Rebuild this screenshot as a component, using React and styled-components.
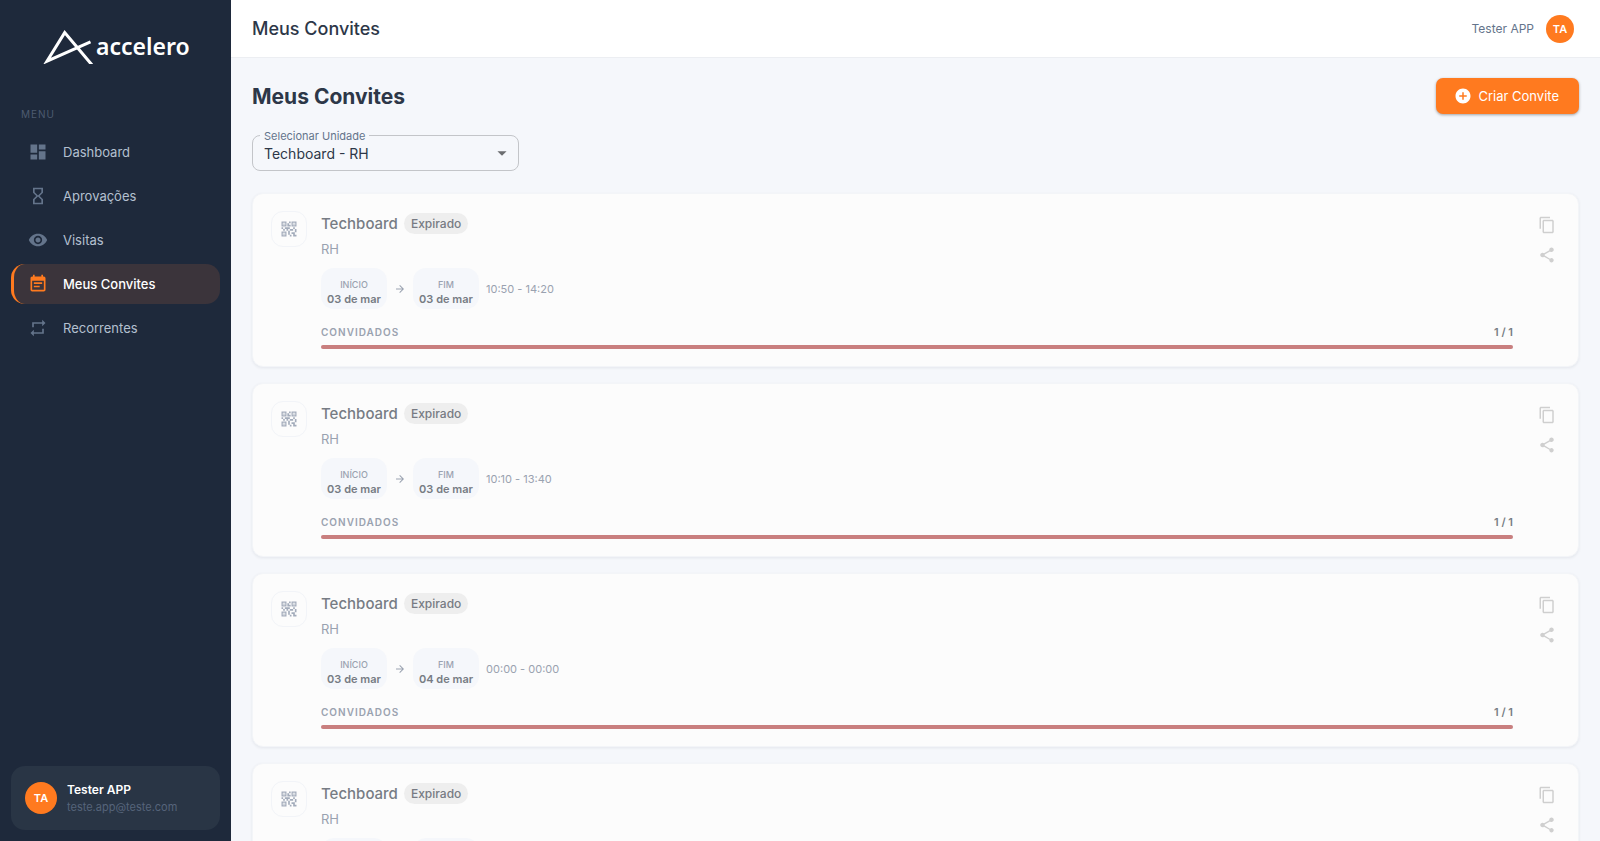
import { useState } from "react";
import styled, { createGlobalStyle } from "styled-components";
import {
  MdAddCircle,
  MdArrowDropDown,
  MdArrowForward,
  MdContentCopy,
  MdDashboard,
  MdEventNote,
  MdHourglassEmpty,
  MdQrCode2,
  MdRepeat,
  MdShare,
  MdVisibility,
} from "react-icons/md";

const menu = [
  { label: "Dashboard", icon: MdDashboard },
  { label: "Aprovações", icon: MdHourglassEmpty },
  { label: "Visitas", icon: MdVisibility },
  { label: "Meus Convites", icon: MdEventNote },
  { label: "Recorrentes", icon: MdRepeat },
];

const invites = [
  { id: 1, start: "03 de mar", end: "03 de mar", time: "10:50 - 14:20", used: 1, total: 1 },
  { id: 2, start: "03 de mar", end: "03 de mar", time: "10:10 - 13:40", used: 1, total: 1 },
  { id: 3, start: "03 de mar", end: "04 de mar", time: "00:00 - 00:00", used: 1, total: 1 },
  { id: 4, start: "03 de mar", end: "03 de mar", time: "10:00 - 12:00", used: 1, total: 1 },
];

const Logo = () => (
  <LogoRow>
    <svg width="50" height="35" viewBox="0 0 50 35" fill="none" aria-hidden="true">
      <path
        d="M47.5 12.8 L4 32.2 L21.7 3.6 L49 36"
        stroke="#fff"
        strokeWidth="3"
        strokeLinejoin="miter"
      />
    </svg>
    <LogoText>accelero</LogoText>
  </LogoRow>
);

const InviteCard = ({ invite }) => (
  <Card>
    <QrBox>
      <MdQrCode2 size={20} />
    </QrBox>

    <CardBody>
      <TitleRow>
        <CardTitle>Techboard</CardTitle>
        <Badge>Expirado</Badge>
      </TitleRow>
      <Unit>RH</Unit>

      <Dates>
        <DateChip>
          <DateLabel>INÍCIO</DateLabel>
          <DateValue>{invite.start}</DateValue>
        </DateChip>
        <MdArrowForward size={12} />
        <DateChip>
          <DateLabel>FIM</DateLabel>
          <DateValue>{invite.end}</DateValue>
        </DateChip>
        <Time>{invite.time}</Time>
      </Dates>

      <GuestsRow>
        <GuestsLabel>CONVIDADOS</GuestsLabel>
        <GuestsCount>
          {invite.used} / {invite.total}
        </GuestsCount>
      </GuestsRow>
      <Track>
        <Bar style={{ width: `${(invite.used / invite.total) * 100}%` }} />
      </Track>
    </CardBody>

    <Actions>
      <IconButton type="button" aria-label="Copiar">
        <MdContentCopy size={18} />
      </IconButton>
      <IconButton type="button" aria-label="Compartilhar">
        <MdShare size={18} />
      </IconButton>
    </Actions>
  </Card>
);

const App = () => {
  const [active, setActive] = useState("Meus Convites");
  const [unit, setUnit] = useState("rh");

  return (
    <>
      <GlobalStyle />
      <Page>
        <Sidebar>
          <Logo />
          <MenuTitle>MENU</MenuTitle>
          <Nav>
            {menu.map(({ label, icon: Icon }) => (
              <NavItem
                key={label}
                href="#"
                $active={active === label}
                onClick={() => setActive(label)}
              >
                <Icon size={20} />
                {label}
              </NavItem>
            ))}
          </Nav>

          <UserCard>
            <Avatar $size={32}>TA</Avatar>
            <div>
              <UserName>Tester APP</UserName>
              <UserEmail>teste.app@teste.com</UserEmail>
            </div>
          </UserCard>
        </Sidebar>

        <Content>
          <Header>
            <HeaderTitle>Meus Convites</HeaderTitle>
            <HeaderUser>
              Tester APP
              <Avatar $size={28}>TA</Avatar>
            </HeaderUser>
          </Header>

          <Main>
            <TopRow>
              <PageTitle>Meus Convites</PageTitle>
              <CreateButton type="button">
                <MdAddCircle size={18} />
                Criar Convite
              </CreateButton>
            </TopRow>

            <Field>
              <FieldLabel htmlFor="unit">Selecionar Unidade</FieldLabel>
              <Select id="unit" value={unit} onChange={(e) => setUnit(e.target.value)}>
                <option value="rh">Techboard - RH</option>
              </Select>
              <FieldArrow>
                <MdArrowDropDown size={22} />
              </FieldArrow>
            </Field>

            <List>
              {invites.map((invite) => (
                <InviteCard key={invite.id} invite={invite} />
              ))}
            </List>
          </Main>
        </Content>
      </Page>
    </>
  );
};

export default App;

// Styled Components
const GlobalStyle = createGlobalStyle`
  * {
    box-sizing: border-box;
  }

  body {
    margin: 0;
    font-family: Inter, "Open Sans", sans-serif;
    color: #2d3748;
    background: #f5f7fb;
  }

  button,
  select {
    font-family: inherit;
  }
`;

const Page = styled.div`
  display: flex;
  height: 100vh;
`;

const Sidebar = styled.aside`
  display: flex;
  flex-direction: column;
  flex: 0 0 231px;
  padding: 29px 11px 11px;
  background: #1e293b;
`;

const LogoRow = styled.div`
  display: flex;
  align-items: center;
  padding-left: 32px;
`;

const LogoText = styled.span`
  margin-left: 3px;
  font-family: "Noto Sans", sans-serif;
  font-size: 23px;
  font-weight: 600;
  line-height: 35px;
  color: #fff;
`;

const MenuTitle = styled.div`
  margin: 42px 0 10px;
  padding-left: 10px;
  font-size: 10px;
  line-height: 16px;
  letter-spacing: 1px;
  color: #4d5b70;
`;

const Nav = styled.nav`
  display: flex;
  flex-direction: column;
  gap: 4px;
`;

const NavItem = styled.a`
  display: flex;
  align-items: center;
  gap: 15px;
  height: 40px;
  padding-left: 14px;
  border-left: 3px solid ${({ $active }) => ($active ? "#ff7a1f" : "transparent")};
  border-radius: 14px;
  background: ${({ $active }) => ($active ? "#3b343b" : "transparent")};
  font-size: 13px;
  font-weight: ${({ $active }) => ($active ? 500 : 400)};
  color: ${({ $active }) => ($active ? "#fff" : "#b4c0d0")};
  text-decoration: none;

  svg {
    color: ${({ $active }) => ($active ? "#ff7a1f" : "#64748b")};
  }
`;

const UserCard = styled.div`
  display: flex;
  align-items: center;
  gap: 10px;
  height: 64px;
  margin-top: auto;
  padding: 0 14px;
  border-radius: 14px;
  background: #293545;
`;

const Avatar = styled.div`
  display: flex;
  align-items: center;
  justify-content: center;
  width: ${({ $size }) => $size}px;
  height: ${({ $size }) => $size}px;
  border-radius: 50%;
  background: #ff7a1f;
  font-size: 11px;
  font-weight: 600;
  color: #fff;
`;

const UserName = styled.div`
  font-size: 12px;
  font-weight: 600;
  line-height: 18px;
  color: #fff;
`;

const UserEmail = styled.div`
  font-size: 11px;
  line-height: 16px;
  color: #56647a;
`;

const Content = styled.div`
  display: flex;
  flex: 1;
  flex-direction: column;
  min-width: 0;
`;

const Header = styled.header`
  display: flex;
  align-items: center;
  justify-content: space-between;
  flex: 0 0 58px;
  padding: 0 26px 0 21px;
  border-bottom: 1px solid #eceef2;
  background: #fff;
`;

const HeaderTitle = styled.div`
  font-size: 18px;
  font-weight: 500;
`;

const HeaderUser = styled.div`
  display: flex;
  align-items: center;
  gap: 12px;
  font-size: 12px;
  color: #64748b;
`;

const Main = styled.main`
  flex: 1;
  min-height: 0;
  overflow-y: auto;
  padding: 20px 21px;
  scrollbar-width: none;
`;

const TopRow = styled.div`
  display: flex;
  align-items: center;
  justify-content: space-between;
`;

const PageTitle = styled.h1`
  margin: 0;
  font-size: 21px;
  font-weight: 700;
`;

const CreateButton = styled.button`
  display: flex;
  align-items: center;
  gap: 6px;
  height: 36px;
  padding: 0 20px 0 18px;
  border: none;
  border-radius: 7px;
  background: #ff7a1f;
  box-shadow: 0 1px 3px rgba(0, 0, 0, 0.35);
  font-size: 13px;
  color: #fff;
  cursor: pointer;
`;

const Field = styled.div`
  position: relative;
  width: 267px;
  margin: 21px 0 22px;
`;

const FieldLabel = styled.label`
  position: absolute;
  top: -7px;
  left: 8px;
  padding: 0 4px;
  background: #f5f7fb;
  font-size: 11px;
  line-height: 16px;
  color: #64748b;
`;

const Select = styled.select`
  display: block;
  width: 100%;
  height: 36px;
  padding: 0 36px 0 11px;
  border: 1px solid #c3c5c9;
  border-radius: 8px;
  background: transparent;
  font-size: 14px;
  color: #2d3748;
  appearance: none;
`;

const FieldArrow = styled.span`
  position: absolute;
  top: 7px;
  right: 6px;
  display: flex;
  color: #6b6d70;
  pointer-events: none;
`;

const List = styled.div`
  display: flex;
  flex-direction: column;
  gap: 16px;
`;

const Card = styled.article`
  display: flex;
  align-items: flex-start;
  padding: 17px 18px;
  border: 1px solid #f3f5f8;
  border-radius: 11px;
  background: #fcfcfc;
  box-shadow: 0 1px 3px rgba(30, 41, 59, 0.08);
`;

const QrBox = styled.div`
  display: flex;
  align-items: center;
  justify-content: center;
  width: 36px;
  height: 36px;
  margin-right: 14px;
  border: 1px solid #f2f4f8;
  border-radius: 12px;
  color: #a3acbb;
`;

const CardBody = styled.div`
  flex: 1;
  min-width: 0;
`;

const TitleRow = styled.div`
  display: flex;
  align-items: center;
  gap: 6px;
  height: 25px;
`;

const CardTitle = styled.h2`
  margin: 0;
  font-size: 15px;
  font-weight: 500;
  color: #777c84;
`;

const Badge = styled.span`
  padding: 0 7px;
  border-radius: 11px;
  background: #eeeeee;
  font-size: 12px;
  font-weight: 500;
  line-height: 21px;
  color: #777b83;
`;

const Unit = styled.div`
  margin-top: 3px;
  font-size: 13px;
  line-height: 20px;
  color: #9aa2b0;
`;

const Dates = styled.div`
  display: flex;
  align-items: center;
  gap: 7px;
  margin-top: 9px;
  color: #9aa2b0;
`;

const DateChip = styled.div`
  min-width: 66px;
  height: 41px;
  padding: 10px 6px 2px;
  border-radius: 13px;
  background: #f5f7fb;
  text-align: center;
`;

const DateLabel = styled.div`
  font-size: 9px;
  font-weight: 500;
  line-height: 14px;
`;

const DateValue = styled.div`
  font-size: 11px;
  font-weight: 600;
  line-height: 15px;
  color: #777c84;
`;

const Time = styled.span`
  font-size: 11px;
`;

const GuestsRow = styled.div`
  display: flex;
  justify-content: space-between;
  margin: 15px 0 5px;
  font-size: 10px;
  font-weight: 600;
  line-height: 16px;
`;

const GuestsLabel = styled.span`
  letter-spacing: 1px;
  color: #9aa2b0;
`;

const GuestsCount = styled.span`
  font-size: 11px;
  color: #777c84;
`;

const Track = styled.div`
  height: 4px;
  border-radius: 2px;
  background: #eef0f4;
`;

const Bar = styled.div`
  height: 100%;
  border-radius: 2px;
  background: #c97f7f;
`;

const Actions = styled.div`
  display: flex;
  flex-direction: column;
  gap: 3px;
  margin-left: 20px;
`;

const IconButton = styled.button`
  display: flex;
  align-items: center;
  justify-content: center;
  width: 27px;
  height: 27px;
  padding: 0;
  border: none;
  background: transparent;
  color: #cfcfcf;
  cursor: pointer;
`;
